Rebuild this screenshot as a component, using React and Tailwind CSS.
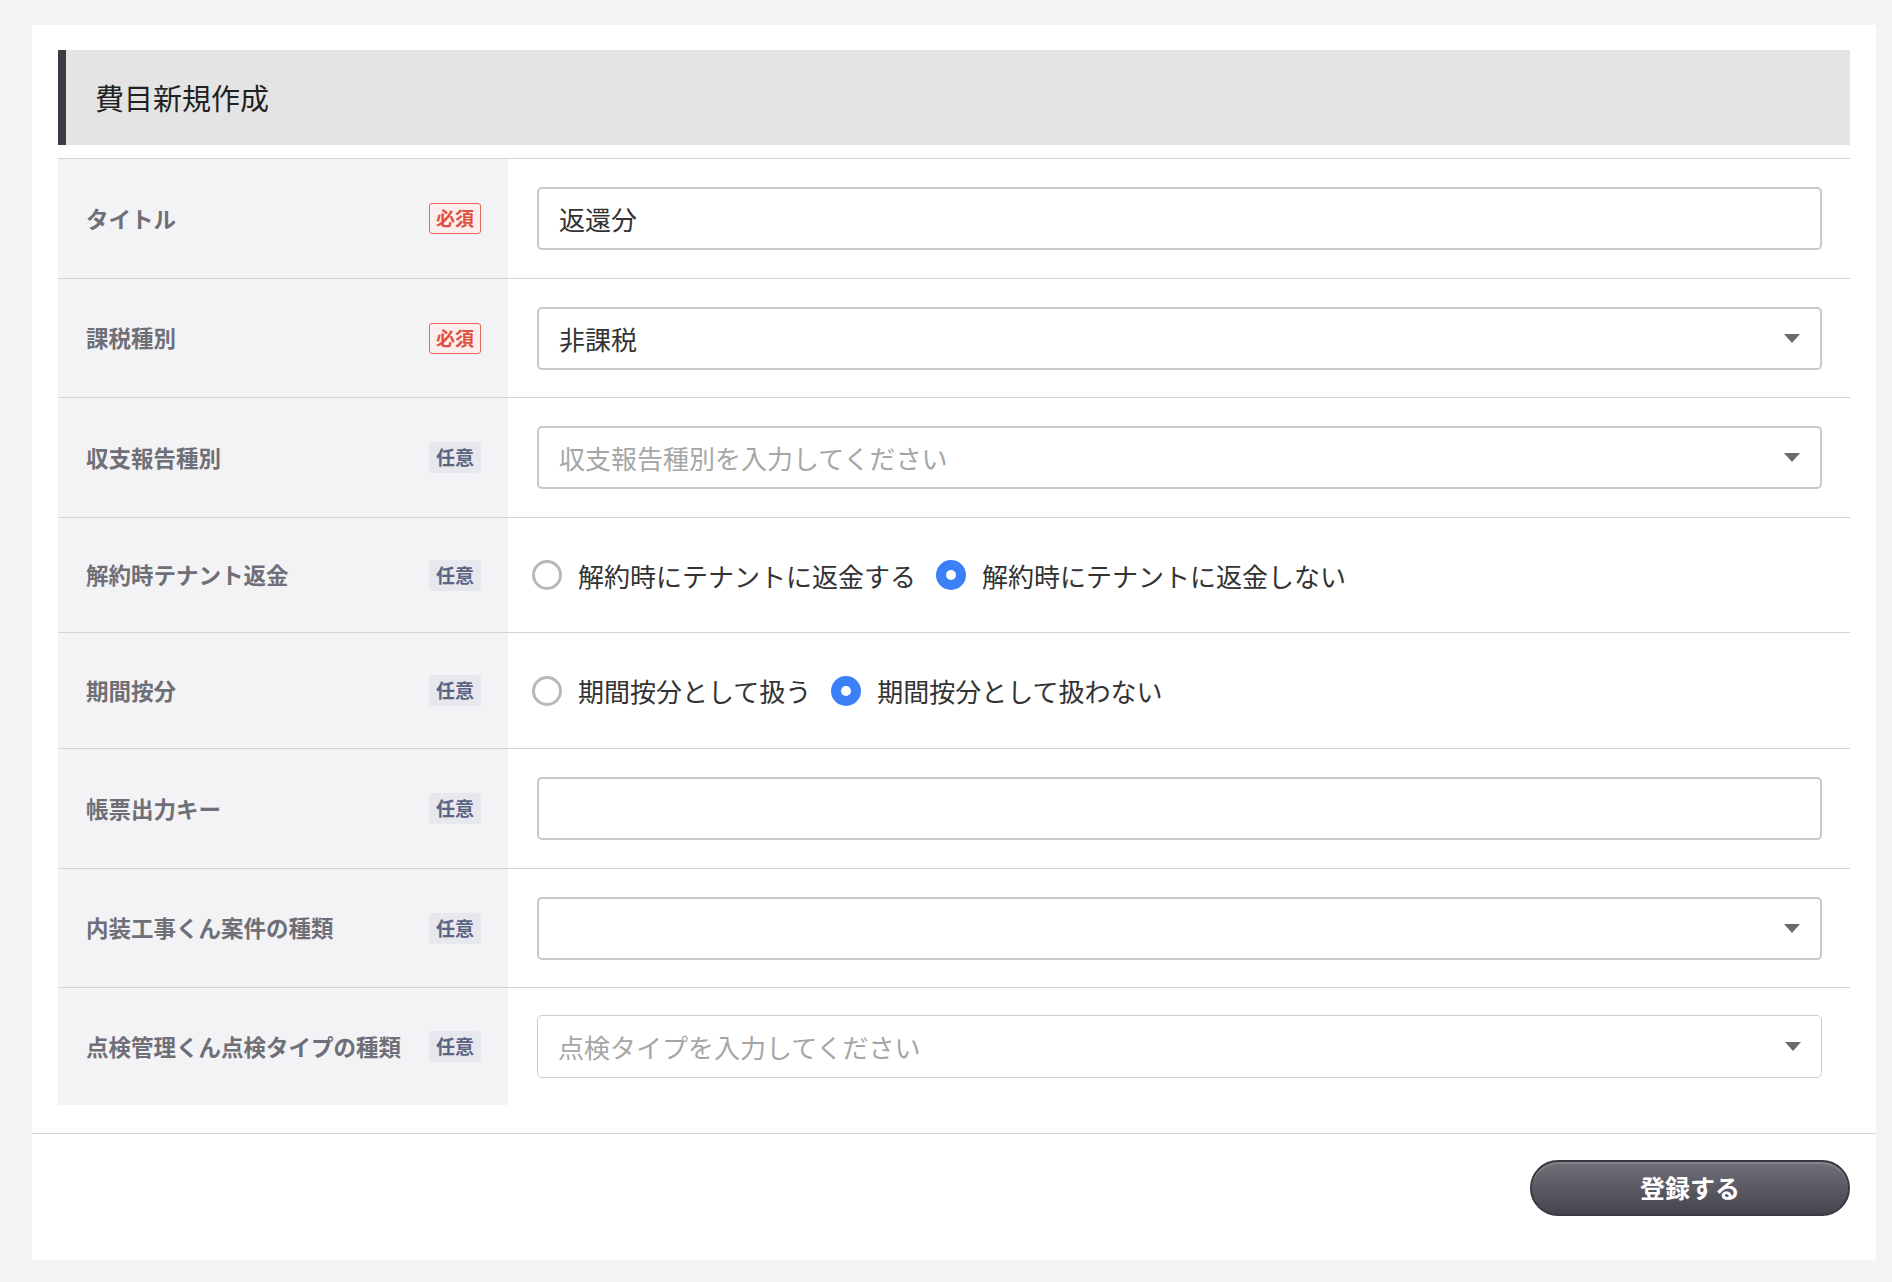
const rows = [
  { label: 'タイトル', required: true, type: 'text', value: '返還分', h: 'h-[120px]' },
  { label: '課税種別', required: true, type: 'select', value: '非課税', h: 'h-[119px]' },
  { label: '収支報告種別', required: false, type: 'select', placeholder: '収支報告種別を入力してください', h: 'h-[120px]' },
  {
    label: '解約時テナント返金',
    required: false,
    type: 'radio',
    options: ['解約時にテナントに返金する', '解約時にテナントに返金しない'],
    selected: 1,
    h: 'h-[115px]',
  },
  {
    label: '期間按分',
    required: false,
    type: 'radio',
    options: ['期間按分として扱う', '期間按分として扱わない'],
    selected: 1,
    h: 'h-[116px]',
  },
  { label: '帳票出力キー', required: false, type: 'text', value: '', h: 'h-[120px]' },
  { label: '内装工事くん案件の種類', required: false, type: 'select', value: '', h: 'h-[119px]' },
  {
    label: '点検管理くん点検タイプの種類',
    required: false,
    type: 'select',
    placeholder: '点検タイプを入力してください',
    thin: true,
    h: 'h-[117px]',
  },
];

const Badge = ({ required }) =>
  required ? (
    <span className="flex h-[31px] w-[52px] items-center justify-center rounded-[3px] border border-[#e8665a] bg-[#fdeeee] text-[19px] font-bold text-[#e0503f]">
      必須
    </span>
  ) : (
    <span className="flex h-[31px] w-[52px] items-center justify-center rounded-[3px] bg-[#e6e8ee] text-[19px] font-bold text-[#5b6483]">
      任意
    </span>
  );

const Caret = () => (
  <svg width="16" height="9" viewBox="0 0 16 9" className="shrink-0">
    <path d="M0 0 H16 L8 9 Z" fill="#6a6a6a" />
  </svg>
);

const Field = ({ row }) => {
  if (row.type === 'radio') {
    return (
      <div className="flex items-center gap-[20px] pl-[24px]">
        {row.options.map((opt, i) => (
          <label key={opt} className="flex items-center gap-[16px] text-[26px] text-[#333]">
            {i === row.selected ? (
              <span className="flex h-[30px] w-[30px] items-center justify-center rounded-full bg-[#3b80f6]">
                <span className="h-[10px] w-[10px] rounded-full bg-white" />
              </span>
            ) : (
              <span className="h-[30px] w-[30px] rounded-full border-[3px] border-[#b8b8b8] bg-white" />
            )}
            <span>{opt}</span>
          </label>
        ))}
      </div>
    );
  }
  const border = row.thin ? 'border border-[#cccccc]' : 'border-2 border-[#c8c8c8]';
  return (
    <div className="w-full pl-[29px] pr-[28px]">
      <div className={`flex h-[63px] w-full items-center justify-between rounded-[5px] bg-white pl-[20px] pr-[20px] ${border}`}>
        {row.value ? (
          <span className="text-[26px] text-[#333]">{row.value}</span>
        ) : (
          <span className="text-[26px] text-[#a6a6a6]">{row.placeholder || ''}</span>
        )}
        {row.type === 'select' && <Caret />}
      </div>
    </div>
  );
};

const App = () => {
  return (
    <div className="min-h-screen bg-[#f4f4f4] pb-[21px] pl-[32px] pr-[16px] pt-[25px] font-['Noto_Sans_CJK_JP','Noto_Sans',sans-serif]">
      <div className="bg-white">
        <div className="px-[26px] pb-[28px] pt-[25px]">
          <div className="flex h-[95px] items-center border-l-[8px] border-[#3e3b45] bg-[#e4e4e4] pl-[29px]">
            <h1 className="text-[29px] text-[#222]">費目新規作成</h1>
          </div>

          <div className="mt-[13px] border-t border-[#d4d4d4]">
            {rows.map((row, i) => {
              const last = i === rows.length - 1;
              return (
                <div
                  key={row.label}
                  className={`flex ${row.h} ${last ? '' : 'border-b border-[#d4d4d4]'}`}
                >
                  <div className="flex w-[450px] shrink-0 items-center justify-between bg-[#f3f3f5] pl-[28px] pr-[27px]">
                    <span className="text-[22.5px] font-bold text-[#6f6f77]">{row.label}</span>
                    <Badge required={row.required} />
                  </div>
                  <div className="flex flex-1 items-center">
                    <Field row={row} />
                  </div>
                </div>
              );
            })}
          </div>
        </div>

        <div className="flex justify-end border-t border-[#d4d4d4] pb-[44px] pr-[26px] pt-[26px]">
          <button className="h-[56px] w-[320px] rounded-full border-2 border-[#3a3840] bg-gradient-to-b from-[#717078] to-[#46444d] text-[25px] font-bold text-white shadow-[inset_0_2px_0_rgba(255,255,255,0.15)]">
            登録する
          </button>
        </div>
      </div>
    </div>
  );
};

export default App;
